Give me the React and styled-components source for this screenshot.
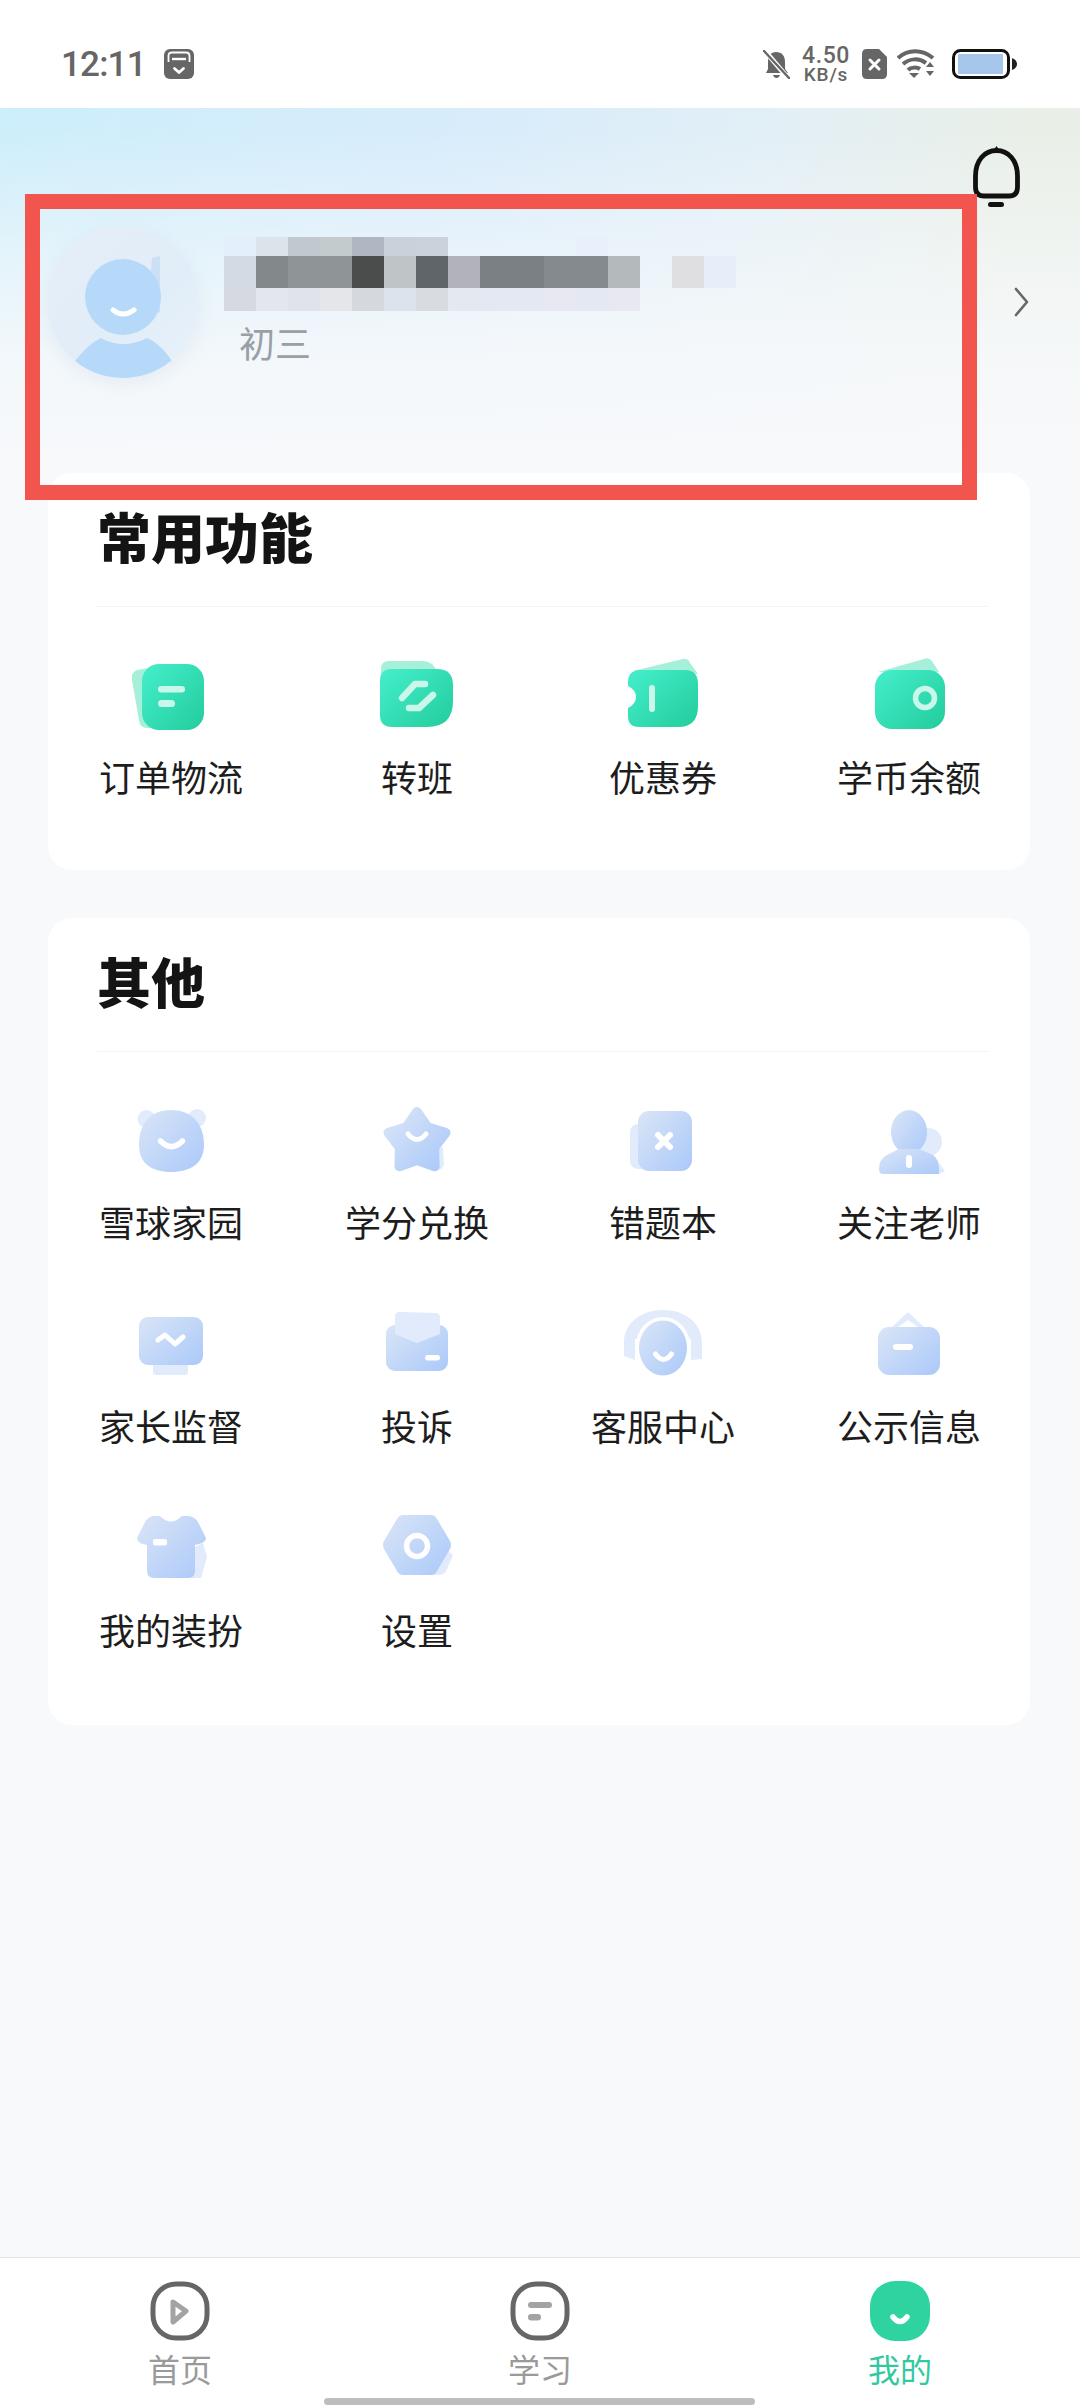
import React, { useId } from "react";
import styled, { createGlobalStyle } from "styled-components";

const Global = createGlobalStyle`
  html, body { margin: 0; padding: 0; background: #f7f9fb; }
  * { box-sizing: border-box; }
`;

const CJK = `"Noto Sans CJK SC", "Noto Sans", sans-serif`;

const Screen = styled.div`
  position: relative;
  width: 1080px;
  height: 2408px;
  display: flex;
  flex-direction: column;
  overflow: hidden;
  background: #f7f9fb;
  font-family: ${CJK};
`;

const StatusBar = styled.div`
  height: 108px;
  flex: none;
  background: #fff;
  display: flex;
  align-items: center;
  padding: 20px 63px 0 61px;
  color: #666;
`;
const Time = styled.span`
  font: 500 35px/1 Roboto, sans-serif;
  letter-spacing: -0.8px;
  color: #666;
`;
const StatusLeft = styled.div`
  display: flex;
  align-items: center;
  gap: 18px;
`;
const StatusRight = styled.div`
  margin-left: auto;
  display: flex;
  align-items: center;
  gap: 10px;
`;
const Speed = styled.div`
  width: 52px;
  display: flex;
  flex-direction: column;
  align-items: center;
  font-family: Roboto, sans-serif;
  font-weight: 500;
  color: #666;
`;
const SpeedValue = styled.span`
  font-size: 23px;
  line-height: 20px;
  letter-spacing: 0.6px;
`;
const SpeedUnit = styled.span`
  font-size: 19px;
  line-height: 17px;
  letter-spacing: 0.8px;
`;
const BatteryWrap = styled.div`
  display: flex;
  margin-left: 7px;
`;

const Hero = styled.div`
  height: 365px;
  flex: none;
  padding: 38px 50px 0 47px;
  background:
    linear-gradient(180deg, rgba(247, 249, 251, 0) 6%, rgba(247, 249, 251, 0.55) 42%, rgba(247, 249, 251, 0.88) 68%, #f7f9fb 95%),
    linear-gradient(100deg, #cdeefb 0%, #d8ecfb 42%, #e2eff6 68%, #e9efe7 90%);
`;
const BellRow = styled.div`
  display: flex;
  justify-content: flex-end;
  padding-right: 10px;
  height: 61px;
  margin-bottom: 18px;
`;
const Profile = styled.div`
  display: flex;
  align-items: center;
  height: 153px;
`;
const Avatar = styled.div`
  width: 152px;
  height: 152px;
  border-radius: 50%;
  flex: none;
  overflow: hidden;
  background: linear-gradient(135deg, #e6eef8 0%, #e1edf8 60%, #e9f2fa 100%);
  box-shadow: 0 6px 18px rgba(150, 170, 195, 0.14);
`;
const ProfileText = styled.div`
  margin-left: 25px;
  display: flex;
  flex-direction: column;
  align-self: flex-start;
  padding-top: 12px;
`;
const Mosaic = styled.svg`
  display: block;
  filter: blur(0.5px);
`;
const Grade = styled.span`
  margin: 7px 0 0 15px;
  font-size: 36px;
  line-height: 48px;
  color: #9a9fa6;
`;
const ChevronBox = styled.div`
  margin-left: auto;
  display: flex;
`;

const Cards = styled.div`
  display: flex;
  flex-direction: column;
  gap: 48px;
  padding: 0 50px 0 48px;
`;
const Card = styled.section`
  background: #fff;
  border-radius: 24px;
  padding-bottom: ${(p) => p.$bottom}px;
`;
const CardHead = styled.div`
  height: 134px;
  margin: 0 42px 0 49px;
  padding-bottom: 7px;
  display: flex;
  align-items: center;
  border-bottom: 1px solid #f1f3f5;
`;
const CardTitle = styled.h2`
  margin: 0;
  font-size: 54px;
  font-weight: 900;
  line-height: 1;
  color: #141414;
`;
const Grid = styled.div`
  display: grid;
  grid-template-columns: repeat(4, 246px);
  row-gap: 57px;
  padding-top: 47px;
`;
const Cell = styled.div`
  display: flex;
  flex-direction: column;
  align-items: center;
`;
const CellIcon = styled.svg`
  display: block;
  width: 80px;
  height: 80px;
`;
const CellLabel = styled.span`
  margin-top: 18px;
  margin-bottom: 1px;
  font-size: 36px;
  line-height: 48px;
  color: #1d1d1d;
  white-space: nowrap;
`;

const Spacer = styled.div`
  flex: 1;
`;

const BottomNav = styled.nav`
  height: 151px;
  flex: none;
  background: #fff;
  border-top: 1px solid #e2e3e6;
  display: grid;
  grid-template-columns: repeat(3, 360px);
  padding-top: 23px;
`;
const NavItem = styled.div`
  display: flex;
  flex-direction: column;
  align-items: center;
`;
const NavLabel = styled.span`
  margin-top: 7px;
  font-size: 32px;
  line-height: 40px;
  color: ${(p) => (p.$active ? "#33c9a0" : "#9a9a9a")};
`;
const HomeBar = styled.div`
  position: absolute;
  left: 324px;
  bottom: 3px;
  width: 431px;
  height: 7px;
  border-radius: 4px;
  background: #bdbdbd;
`;
const Annotation = styled.div`
  position: absolute;
  left: 25px;
  top: 194px;
  width: 952px;
  height: 306px;
  border: 15px solid #f2544e;
  pointer-events: none;
`;

const PALETTE = {
  green: ["#42ecc9", "#26cf9f", "#a6f0da", "#c9f8ea"],
  blue: ["#d6e3f7", "#aecbf9", "#e1ebfb", "#ffffff"],
};

function Glyph({ tone, draw }) {
  const id = useId();
  const [a, b, back, mark] = PALETTE[tone];
  const fill = `url(#${id})`;
  return (
    <CellIcon viewBox="0 0 80 80">
      <defs>
        <linearGradient id={id} x1="0.05" y1="0.1" x2="0.95" y2="0.9">
          <stop offset="0" stopColor={a} />
          <stop offset="1" stopColor={b} />
        </linearGradient>
      </defs>
      {draw({ fill, back, mark })}
    </CellIcon>
  );
}

const Smile = ({ x, y, w = 11, mark = "#fff", sw = 5.5 }) => (
  <path
    d={`M${x - w} ${y - 3} Q${x} ${y + 8} ${x + w} ${y - 3}`}
    fill="none"
    stroke={mark}
    strokeWidth={sw}
    strokeLinecap="round"
  />
);

const GREEN = [
  {
    label: "订单物流",
    draw: ({ fill, back, mark }) => (
      <>
        <path d="M6 16 L30 12 L30 74 L16 74 Q9 74 8 66 L1 26 Q0 18 6 16Z" fill={back} />
        <rect x="11" y="10" width="62" height="66" rx="17" fill={fill} />
        <rect x="27" y="32" width="27" height="6.5" rx="3.2" fill={mark} />
        <rect x="27" y="46" width="17" height="7" rx="3.5" fill={mark} />
      </>
    ),
  },
  {
    label: "转班",
    draw: ({ fill, back, mark }) => (
      <>
        <path d="M12 7 H46 Q56 7 60 18 V30 H4 V15 Q4 7 12 7Z" fill={back} />
        <path d="M15 15 H60 Q76 15 76 31 V47 Q76 73 50 73 H15 Q3 73 3 61 V27 Q3 15 15 15Z" fill={fill} />
        <path d="M48 30 H38 L25 44 M56 41 L42 54 H32" fill="none" stroke={mark} strokeWidth="6.5" strokeLinecap="round" strokeLinejoin="round" />
      </>
    ),
  },
  {
    label: "优惠券",
    draw: ({ fill, back, mark }) => (
      <>
        <path d="M10 17 L60 5 Q65 4 67 9 L75 20 Z" fill={back} />
        <path d="M18 16 H62 Q75 16 75 30 V52 Q75 73 55 73 H16 Q5 73 5 62 V54 Q13 50 13 43 Q13 36 5 32 V28 Q5 16 18 16Z" fill={fill} />
        <rect x="26" y="31" width="6" height="27" rx="3" fill={mark} />
      </>
    ),
  },
  {
    label: "学币余额",
    draw: ({ fill, back, mark }) => (
      <>
        <path d="M9 18 L55 5 Q60 3 63 7 L70 18 Z" fill={back} />
        <rect x="6" y="16" width="70" height="59" rx="17" fill={fill} />
        <circle cx="56" cy="44" r="9.5" fill="none" stroke={mark} strokeWidth="5.5" />
      </>
    ),
  },
];

const BLUE = [
  {
    label: "雪球家园",
    draw: ({ fill, back, mark }) => (
      <>
        <circle cx="15.5" cy="20" r="9" fill={back} />
        <circle cx="66" cy="19" r="9" fill={back} />
        <path d="M40 11 C62 11 73 26 73 46 C73 64 60 73 40 73 C20 73 8 64 8 46 C8 26 18 11 40 11Z" fill={fill} />
        <Smile x={40.5} y={45} mark={mark} />
      </>
    ),
  },
  {
    label: "学分兑换",
    draw: ({ fill, back, mark }) => (
      <>
        <path d="M48 54 L66 48 L67 66 Q65 72 58 71 L44 67Z" fill={back} />
        <path
          d="M40 13 L50.6 28.400 L68.500 33.700 L57.100 48.600 L57.600 67.300 L40 61 L22.400 67.300 L22.900 48.600 L11.500 33.700 L29.400 28.400Z"
          fill={fill}
          stroke={fill}
          strokeWidth="10"
          strokeLinejoin="round"
        />
        <Smile x={40} y={38} w={9} mark={mark} sw={5} />
      </>
    ),
  },
  {
    label: "错题本",
    draw: ({ fill, back, mark }) => (
      <>
        <rect x="7" y="25" width="30" height="45" rx="8" fill={back} />
        <rect x="15" y="12" width="54" height="60" rx="11" fill={fill} />
        <path d="M35 36 L47 48 M47 36 L35 48" stroke={mark} strokeWidth="6" strokeLinecap="round" />
      </>
    ),
  },
  {
    label: "关注老师",
    draw: ({ fill, back, mark }) => (
      <>
        <circle cx="59" cy="43" r="14" fill={back} />
        <path d="M50 58 L70 64 L76 72 L70 75 L50 75Z" fill={back} />
        <ellipse cx="40" cy="33" rx="18" ry="22" fill={fill} />
        <path d="M30 50 L50 50 L64 56 Q70 60 70 70 V75 H14 Q10 75 10 70 Q10 60 18 56Z" fill={fill} />
        <rect x="37" y="56" width="6" height="13" rx="3" fill={mark} />
      </>
    ),
  },
  {
    label: "家长监督",
    draw: ({ fill, back, mark }) => (
      <>
        <rect x="22" y="56" width="35" height="16" rx="3" fill={back} />
        <rect x="8" y="14" width="64" height="48" rx="9" fill={fill} />
        <path d="M27 37 L34 32 L44 41 L52 34" fill="none" stroke={mark} strokeWidth="5" strokeLinecap="round" strokeLinejoin="round" />
      </>
    ),
  },
  {
    label: "投诉",
    draw: ({ fill, back, mark }) => (
      <>
        <rect x="9" y="22" width="62" height="46" rx="9" fill={fill} />
        <path d="M18 13 Q18 9 23 9 L58 10 Q63 10 63 14 V31 L40 40 L18 31Z" fill={back} />
        <rect x="48" y="52" width="15" height="5.5" rx="2.7" fill={mark} />
      </>
    ),
  },
  {
    label: "客服中心",
    draw: ({ fill, back, mark }) => (
      <>
        <path d="M1 40 C1 20 18 7 40 7 C62 7 79 20 79 40 V56 L68 57 V36 H12 V57 L1 53Z" fill={back} />
        <ellipse cx="40" cy="44" rx="27.5" ry="30" fill="#fff" />
        <ellipse cx="40" cy="45" rx="24" ry="27.5" fill={fill} />
        <Smile x={40.5} y={54} w={8} mark={mark} sw={5} />
      </>
    ),
  },
  {
    label: "公示信息",
    draw: ({ fill, back, mark }) => (
      <>
        <path d="M39 9 L56 25 H50 L39 17 L28 25 H22Z" fill={back} />
        <rect x="9" y="24" width="62" height="48" rx="11" fill={fill} />
        <rect x="24" y="41" width="20" height="6" rx="3" fill={mark} />
      </>
    ),
  },
  {
    label: "我的装扮",
    draw: ({ fill, back, mark }) => (
      <>
        <path d="M56 44 L72 36 L76 50 L70 71 H56Z" fill={back} />
        <path
          d="M22 9 L29 9 Q40 20 51 9 L58 9 Q65 10 68 17 L75 31 Q75 35 68 37 L64 38 V64 Q64 71 57 71 H23 Q16 71 16 64 V38 L12 37 Q6 35 6 31 L13 17 Q16 10 22 9Z"
          fill={fill}
        />
        <rect x="22" y="32" width="14" height="6.5" rx="2.5" fill={mark} />
      </>
    ),
  },
  {
    label: "设置",
    draw: ({ fill, back, mark }) => (
      <>
        <path d="M62 36 L76 48 L70 62 Q68 68 62 68 H50Z" fill={back} />
        <path d="M26 8 H54 Q58 8 60 12 L73 34 Q75 38 73 42 L60 64 Q58 68 54 68 H26 Q22 68 20 64 L7 42 Q5 38 7 34 L20 12 Q22 8 26 8Z" fill={fill} />
        <circle cx="40" cy="39" r="10.5" fill="none" stroke={mark} strokeWidth="5.5" />
      </>
    ),
  },
];

const MOSAIC = [
  { y: 0, h: 19, cells: ["#e3effa", "#dde3ea", "#c2c8d0", "#c3cbcd", "#b0b7c3", "#cbd1db", "#ccd2dc", null, null, null, null, "#eaf0fb"] },
  { y: 19, h: 32, cells: ["#d2dae4", "#83888b", "#8f9496", "#8f9496", "#4b4d4c", "#bfc4c6", "#60656a", "#b1b2bb", "#7a8083", "#7a8083", "#848a8d", "#848a8d", "#b4babc", null, "#dfdfe1", "#e6eefa"] },
  { y: 51, h: 23, cells: ["#d6d9df", "#e3e6ec", "#e0e4ea", "#e4e6ea", "#d5d9de", "#dde3ed", "#d8dce0", "#e4e8f0", "#e4e8f2", "#e4e8f2", "#e8e8f2", "#e4e8f2", "#e8e8f2"] },
];

function NameMosaic() {
  return (
    <Mosaic width="512" height="74" viewBox="0 0 512 74">
      {MOSAIC.flatMap((row) =>
        row.cells.map((c, i) =>
          c ? <rect key={`${row.y}-${i}`} x={i * 32} y={row.y} width="32" height={row.h} fill={c} /> : null
        )
      )}
    </Mosaic>
  );
}

const NAV_GREY = "#666";

const HomeIcon = () => (
  <svg width="60" height="60" viewBox="0 0 60 60">
    <rect x="3" y="3" width="54" height="54" rx="23" fill="none" stroke={NAV_GREY} strokeWidth="5" />
    <path d="M23 21 L36 30 L23 41Z" fill="none" stroke="#a3a3a3" strokeWidth="5" strokeLinejoin="round" />
  </svg>
);
const StudyIcon = () => (
  <svg width="60" height="60" viewBox="0 0 60 60">
    <rect x="3" y="3" width="54" height="54" rx="23" fill="none" stroke={NAV_GREY} strokeWidth="5" />
    <rect x="18" y="21" width="24" height="6" rx="3" fill="#a3a3a3" />
    <rect x="18" y="33" width="13" height="6.5" rx="3.2" fill="#a3a3a3" />
  </svg>
);
const MineIcon = () => (
  <svg width="60" height="60" viewBox="0 0 60 60">
    <rect x="0" y="0" width="60" height="60" rx="25" fill="#2ed3a0" />
    <path d="M23 36 Q30 45 37 36" fill="none" stroke="#fff" strokeWidth="5.5" strokeLinecap="round" />
  </svg>
);

const TopBell = () => (
  <svg width="47" height="61" viewBox="0 0 47 61">
    <path d="M20 5 L23.500 0 L27 5Z" fill="#111" />
    <path
      d="M2.500 30 C2.500 14 12 4.500 23.500 4.500 C35 4.500 44.500 14 44.500 30 V41 Q44.500 50 36 50 H11 Q2.500 50 2.500 41Z"
      fill="none"
      stroke="#111"
      strokeWidth="4.8"
      strokeLinejoin="round"
    />
    <rect x="15" y="56" width="16" height="5" rx="2.5" fill="#111" />
  </svg>
);

const Chevron = () => (
  <svg width="16" height="30" viewBox="0 0 16 30">
    <path d="M2 2 L13 15 L2 28" fill="none" stroke="#666" strokeWidth="2.6" strokeLinecap="round" strokeLinejoin="round" />
  </svg>
);

const AvatarFigure = () => (
  <svg width="152" height="152" viewBox="0 0 152 152">
    <path d="M105 32 L113 30 V86 L100 92Z" fill="#cbdff6" />
    <circle cx="76" cy="71" r="38" fill="#b7d9f9" />
    <path d="M66 84 Q76 92 87 84" fill="none" stroke="#fff" strokeWidth="5" strokeLinecap="round" />
    <path d="M25 140 C35 124 46 116 54 112 Q76 124 100 112 C110 116 120 126 128 140 L110 156 H40Z" fill="#b7d9f9" />
  </svg>
);

const CalendarStatus = () => (
  <svg width="30" height="30" viewBox="0 0 30 30">
    <rect width="30" height="30" rx="6" fill="#666" />
    <path d="M4.500 13 V7 Q4.500 3.500 8 3.500 H22 Q25.500 3.500 25.500 7 V13" fill="none" stroke="#fff" strokeWidth="1.8" />
    <path d="M8 10 H22" stroke="#fff" strokeWidth="2.4" />
    <path d="M10.500 19.500 L15 23.500 L19.500 19.500" fill="none" stroke="#fff" strokeWidth="2.8" strokeLinecap="round" strokeLinejoin="round" />
  </svg>
);
const MuteBell = () => (
  <svg width="27" height="29" viewBox="0 0 27 29">
    <path d="M13 2 C19 2 22 6 22 12 V19 L25 23 H3 L5 19 V12 C5 6 8 2 13 2Z M10 25 H17 Q16 28 13.500 28 Q11 28 10 25Z" fill="#666" />
    <path d="M2 1 L25 28" stroke="#fff" strokeWidth="5" />
    <path d="M1 1 L26 28" stroke="#666" strokeWidth="2.4" strokeLinecap="round" />
  </svg>
);
const SimX = () => (
  <svg width="25" height="30" viewBox="0 0 25 30">
    <path d="M5 0 H17 L25 8 V25 Q25 30 20 30 H5 Q0 30 0 25 V5 Q0 0 5 0Z" fill="#666" />
    <path d="M8 11 L17 20 M17 11 L8 20" stroke="#fff" strokeWidth="3" strokeLinecap="round" />
  </svg>
);
const Wifi = () => (
  <svg width="38" height="30" viewBox="0 0 38 30">
    <g fill="none" stroke="#666" strokeWidth="4">
      <path d="M1 9 C11 0 25 0 36 9" />
      <path d="M6 15 C13 9 22 9 29 14" />
      <path d="M11 21 C14 18 20 18 23 20" />
    </g>
    <path d="M12 24 H22 L17 29Z" fill="#666" />
    <path d="M29 18 L33 13 L37 18Z M29 22 H37 L33 27Z" fill="#666" />
  </svg>
);
const Battery = () => (
  <svg width="65" height="30" viewBox="0 0 65 30">
    <rect x="1.500" y="1.500" width="55" height="27" rx="7" fill="#fff" stroke="#111" strokeWidth="3" />
    <rect x="6" y="5" width="45" height="20" rx="1" fill="#a6c6ea" />
    <path d="M60 9 Q65 11 65 15 Q65 19 60 21Z" fill="#222" />
  </svg>
);

function IconCell({ tone, item }) {
  return (
    <Cell>
      <Glyph tone={tone} draw={item.draw} />
      <CellLabel>{item.label}</CellLabel>
    </Cell>
  );
}

export default function App() {
  return (
    <Screen>
      <Global />
      <StatusBar>
        <StatusLeft>
          <Time>12:11</Time>
          <CalendarStatus />
        </StatusLeft>
        <StatusRight>
          <MuteBell />
          <Speed>
            <SpeedValue>4.50</SpeedValue>
            <SpeedUnit>KB/s</SpeedUnit>
          </Speed>
          <SimX />
          <Wifi />
          <BatteryWrap>
            <Battery />
          </BatteryWrap>
        </StatusRight>
      </StatusBar>

      <Hero>
        <BellRow>
          <TopBell />
        </BellRow>
        <Profile>
          <Avatar>
            <AvatarFigure />
          </Avatar>
          <ProfileText>
            <NameMosaic />
            <Grade>初三</Grade>
          </ProfileText>
          <ChevronBox>
            <Chevron />
          </ChevronBox>
        </Profile>
      </Hero>

      <Cards>
        <Card $bottom={69}>
          <CardHead>
            <CardTitle>常用功能</CardTitle>
          </CardHead>
          <Grid>
            {GREEN.map((item) => (
              <IconCell key={item.label} tone="green" item={item} />
            ))}
          </Grid>
        </Card>
        <Card $bottom={71}>
          <CardHead>
            <CardTitle>其他</CardTitle>
          </CardHead>
          <Grid>
            {BLUE.map((item) => (
              <IconCell key={item.label} tone="blue" item={item} />
            ))}
          </Grid>
        </Card>
      </Cards>

      <Spacer />

      <BottomNav>
        <NavItem>
          <HomeIcon />
          <NavLabel>首页</NavLabel>
        </NavItem>
        <NavItem>
          <StudyIcon />
          <NavLabel>学习</NavLabel>
        </NavItem>
        <NavItem>
          <MineIcon />
          <NavLabel $active>我的</NavLabel>
        </NavItem>
      </BottomNav>
      <HomeBar />
      <Annotation />
    </Screen>
  );
}
